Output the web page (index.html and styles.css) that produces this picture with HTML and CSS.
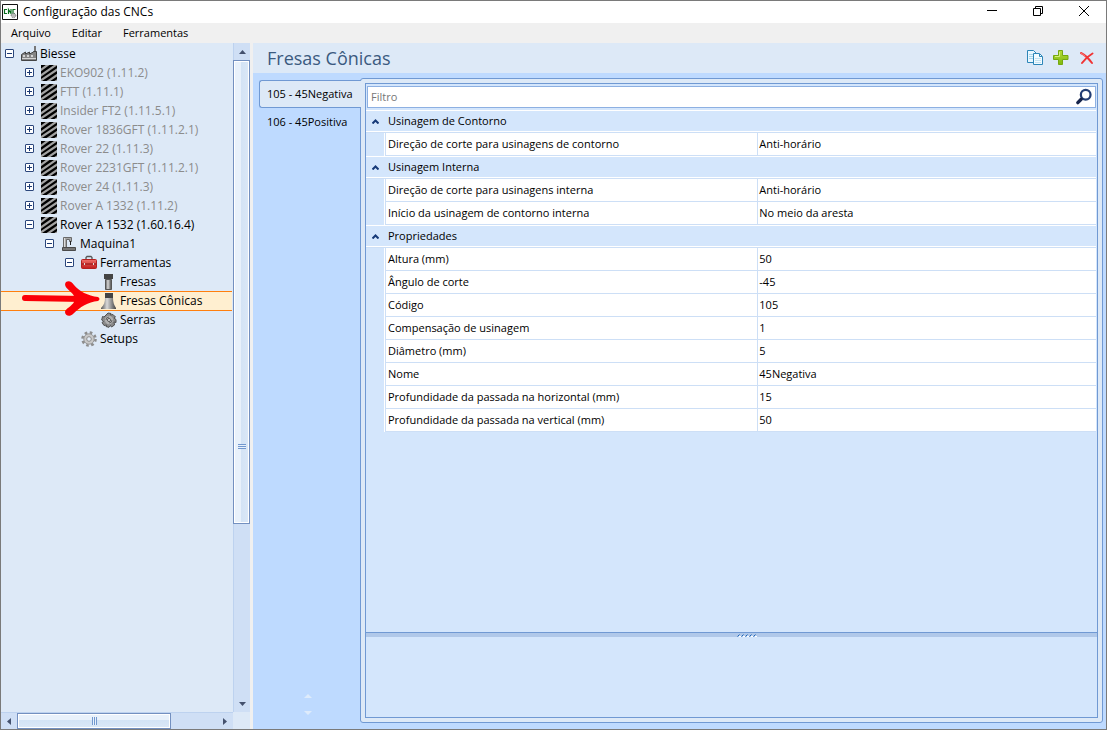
FILE: index.html
```html
<!DOCTYPE html>
<html lang="pt-BR">
<head>
<meta charset="utf-8">
<title>Configuração das CNCs</title>
<link rel="stylesheet" href="styles.css">
</head>
<body>
<svg class="defs" aria-hidden="true">
  <defs>
    <linearGradient id="metal" x1="0" x2="1" y1="0" y2="0">
      <stop offset="0" stop-color="#555"/><stop offset=".4" stop-color="#d8d8d8"/><stop offset="1" stop-color="#444"/>
    </linearGradient>
    <linearGradient id="leaf" x1="0" x2="0" y1="0" y2="1">
      <stop offset="0" stop-color="#b4dc3a"/><stop offset="1" stop-color="#7fb80e"/>
    </linearGradient>
    <linearGradient id="box" x1="0" x2="0" y1="0" y2="1">
      <stop offset="0" stop-color="#f0706a"/><stop offset="1" stop-color="#c01c1c"/>
    </linearGradient>
    <symbol id="stripes" viewBox="0 0 16 16">
      <path fill="#000" d="M0 0h16v16H0z"/>
      <path stroke="#a3a3a3" stroke-width="2.200" d="M-1 5.500 8-1M-1 11 17-1.500M-1 16 17 4M6 17l11-7.500M13 17.500l4-2.500"/>
    </symbol>
    <symbol id="factory" viewBox="0 0 16 16">
      <path fill="#858585" stroke="#444" d="M.5 14.500V8.500L4.500 6v2L8.500 6v2L12.500 6V5.500h3v9z"/>
      <path fill="#d5d5d5" d="M2 9h2v2H2zM6 9h2v2H6zM10 9h2v2h-2zM1 12h14v1H1z"/>
      <path fill="#777" d="M13 0h2v5h-2z"/>
    </symbol>
    <symbol id="machine" viewBox="0 0 16 16">
      <path fill="#a8a8a8" stroke="#6a6a6a" d="M2.500 11.500v-10h8v4h-2v-2h-3v8z"/>
      <path fill="#777" stroke="#4a4a4a" d="M1.500 11.500h13v3h-13z"/>
      <path stroke="#222" d="M9.500 5v4"/>
      <path fill="#ddd" d="M3 2h1v9H3z"/>
    </symbol>
    <symbol id="toolbox" viewBox="0 0 16 16">
      <path fill="none" stroke="#555" stroke-width="1.300" d="M5 5V2.500L6 1.500h4l1 1V5"/>
      <rect x=".5" y="4.500" width="15" height="9" rx="1" fill="url(#box)" stroke="#b42020"/>
      <path fill="#8e1010" d="M1 8.500h14v1H1z"/>
      <path fill="#ddd" d="M3 8h1v2H3zM12 8h1v2h-1z"/>
    </symbol>
    <symbol id="mill" viewBox="0 0 16 16">
      <path fill="url(#metal)" stroke="#555" d="M4.500 5.500h6v10h-6z"/>
      <path fill="#444" d="M3 0h9v5H3z"/>
    </symbol>
    <symbol id="cone" viewBox="0 0 16 16">
      <path fill="url(#metal)" d="M4 5h8c0 4 1 7 3 10v1H0v-1c3-3 4-6 4-10z"/>
      <path fill="#444" d="M4 0h8v5H4z"/>
    </symbol>
    <symbol id="saw" viewBox="0 0 16 16">
      <path fill="#8a8a8a" stroke="#505050" stroke-linejoin="round" d="M5 3 7 1l3 .5L9.500 3 12 2.500l2.500 2.500-1.500 1 2 1.500v3L13 10l.5 3-3 2-1-1.500L8 15.300l-3-.8.500-1.500-2.500.5L1 10.500l1.500-1L.7 8l.8-3.500L3 5z"/>
      <circle cx="8" cy="8" r="4.200" fill="#b0b0b0"/>
      <path fill="none" stroke="#666" d="M5 8q0-3 3-3M11 8q0 3-3 3"/>
      <circle cx="8" cy="8" r="1.500" fill="#eee" stroke="#555"/>
    </symbol>
    <symbol id="gear" viewBox="0 0 16 16">
      <circle cx="8" cy="8" r="6.500" fill="none" stroke="#8d8d8d" stroke-width="2.600" stroke-dasharray="2.600 2.500"/>
      <circle cx="8" cy="8" r="5.200" fill="#c9c9c9" stroke="#999"/>
      <circle cx="8" cy="8" r="2.300" fill="#e4edf7" stroke="#8d8d8d"/>
    </symbol>
  </defs>
</svg>

<div class="window">
  <header class="titlebar">
    <svg class="app-icon" viewBox="0 0 16 16" aria-hidden="true">
      <path fill="#fff" stroke="#111" d="M.5.500h15v15H.5z"/>
      <path fill="none" stroke="#0a6e1e" stroke-width="1.200" d="M5 5.500H2.500v4H5M6.500 10V5.500l2.500 4V5M13.500 5.500H11v4h2"/>
      <circle cx="11.500" cy="11.500" r="2.300" fill="#bbb" stroke="#777" stroke-dasharray="1 1"/>
    </svg>
    <h1 class="title">Configuração das CNCs</h1>
    <div class="window-buttons">
      <button class="wbtn" aria-label="Minimizar"><svg viewBox="0 0 12 12"><path d="M1 5.500h10"/></svg></button>
      <button class="wbtn" aria-label="Restaurar"><svg viewBox="0 0 12 12"><path d="M1.500 3.500h7v7h-7zM3.500 3V1.500h7v7H9"/></svg></button>
      <button class="wbtn" aria-label="Fechar"><svg viewBox="0 0 12 12"><path d="m1 1 10 10M11 1 1 11"/></svg></button>
    </div>
  </header>

  <nav class="menubar">
    <button class="menu">Arquivo</button>
    <button class="menu">Editar</button>
    <button class="menu">Ferramentas</button>
  </nav>

  <div class="content">
    <aside class="sidebar">
      <ul class="tree">
        <li class="node"><button class="expander open" aria-label="Recolher"></button><svg class="icon"><use href="#factory"/></svg><span>Biesse</span></li>
        <li class="node l1 dim"><button class="expander" aria-label="Expandir"></button><svg class="icon"><use href="#stripes"/></svg><span>EKO902 (1.11.2)</span></li>
        <li class="node l1 dim"><button class="expander" aria-label="Expandir"></button><svg class="icon"><use href="#stripes"/></svg><span>FTT (1.11.1)</span></li>
        <li class="node l1 dim"><button class="expander" aria-label="Expandir"></button><svg class="icon"><use href="#stripes"/></svg><span>Insider FT2 (1.11.5.1)</span></li>
        <li class="node l1 dim"><button class="expander" aria-label="Expandir"></button><svg class="icon"><use href="#stripes"/></svg><span>Rover 1836GFT (1.11.2.1)</span></li>
        <li class="node l1 dim"><button class="expander" aria-label="Expandir"></button><svg class="icon"><use href="#stripes"/></svg><span>Rover 22 (1.11.3)</span></li>
        <li class="node l1 dim"><button class="expander" aria-label="Expandir"></button><svg class="icon"><use href="#stripes"/></svg><span>Rover 2231GFT (1.11.2.1)</span></li>
        <li class="node l1 dim"><button class="expander" aria-label="Expandir"></button><svg class="icon"><use href="#stripes"/></svg><span>Rover 24 (1.11.3)</span></li>
        <li class="node l1 dim"><button class="expander" aria-label="Expandir"></button><svg class="icon"><use href="#stripes"/></svg><span>Rover A 1332 (1.11.2)</span></li>
        <li class="node l1"><button class="expander open" aria-label="Recolher"></button><svg class="icon"><use href="#stripes"/></svg><span>Rover A 1532 (1.60.16.4)</span></li>
        <li class="node l2"><button class="expander open" aria-label="Recolher"></button><svg class="icon"><use href="#machine"/></svg><span>Maquina1</span></li>
        <li class="node l3"><button class="expander open" aria-label="Recolher"></button><svg class="icon"><use href="#toolbox"/></svg><span>Ferramentas</span></li>
        <li class="node l4"><i class="blank"></i><svg class="icon"><use href="#mill"/></svg><span>Fresas</span></li>
        <li class="node l4 selected"><i class="blank"></i><svg class="icon"><use href="#cone"/></svg><span>Fresas Cônicas</span>
          <svg class="pointer" viewBox="0 0 80 36" aria-hidden="true"><path fill="none" stroke="#fb0007" stroke-linecap="round" stroke-linejoin="round" stroke-width="6" d="M4 17 62 18"/><path fill="#fb0007" d="M45 1c3-2 6 0 8 3 5 6 14 11 24 12q3 2 0 4c-10 1-18 6-25 13-3 3-8 2-8-2 0-3 7-6 9-10V15c-2-5-12-9-8-14z"/></svg>
        </li>
        <li class="node l4"><i class="blank"></i><svg class="icon"><use href="#saw"/></svg><span>Serras</span></li>
        <li class="node l3"><i class="blank"></i><svg class="icon"><use href="#gear"/></svg><span>Setups</span></li>
      </ul>
      <div class="vbar">
        <button class="sbtn" aria-label="Rolar para cima"><svg viewBox="0 0 7 4" width="7" height="4"><path d="M0 4h7L3.500 0z"/></svg></button>
        <div class="vtrack"><div class="vthumb"><i class="vgrip"></i></div></div>
        <button class="sbtn" aria-label="Rolar para baixo"><svg viewBox="0 0 7 4" width="7" height="4"><path d="M0 0h7L3.500 4z"/></svg></button>
      </div>
      <div class="hbar">
        <button class="sbtn" aria-label="Rolar para a esquerda"><svg viewBox="0 0 4 7" width="4" height="7"><path d="M4 0v7L0 3.500z"/></svg></button>
        <div class="htrack"><div class="hthumb"><i class="hgrip"></i></div></div>
        <button class="sbtn" aria-label="Rolar para a direita"><svg viewBox="0 0 4 7" width="4" height="7"><path d="M0 0v7l4-3.500z"/></svg></button>
      </div>
    </aside>

    <main class="main">
      <header class="heading">
        <h2 class="heading-text">Fresas Cônicas</h2>
        <button class="tool" aria-label="Duplicar"><svg viewBox="0 0 16 16"><path fill="#e9f7ff" stroke="#2d86b8" d="M.5.500h6l3 3v9h-9z"/><path fill="none" stroke="#a9d6ea" d="M2 4.500h4M2 6.500h4M2 8.500h4"/><path fill="#f2fbff" stroke="#2d86b8" d="M6.500 3.500h6l3 3v8h-9z"/><path fill="none" stroke="#2d86b8" d="M12.500 4v2.500H15"/><path fill="none" stroke="#c4e2f1" d="M8 8.500h6M8 10.500h6M8 12.500h6"/></svg></button>
        <button class="tool" aria-label="Adicionar"><svg viewBox="0 0 16 16"><path fill="url(#leaf)" stroke="#75a80f" d="M5.500.500h4v5h5.500v4H9.500v5h-4v-5H.5v-4h5z"/><path fill="none" stroke="#d5ef80" d="M6.500 2v4.500H2"/></svg></button>
        <button class="tool" aria-label="Excluir"><svg viewBox="0 0 16 16"><path fill="none" stroke="#f03434" stroke-width="2" stroke-linecap="round" d="M2 3c4 2 8 6 11 10M13.500 3.500C9 6 6 9 3 13"/><path fill="none" stroke="#fb7d7d" stroke-linecap="round" d="M2 3l4 3"/></svg></button>
      </header>

      <div class="workspace">
        <div class="tabs">
          <button class="tab active">105 - 45Negativa</button>
          <button class="tab">106 - 45Positiva</button>
          <div class="tab-scroll">
            <svg viewBox="0 0 8 4" width="8" height="4"><path d="M0 4h8L4 0z"/></svg>
            <svg viewBox="0 0 8 4" width="8" height="4"><path d="M0 0h8L4 4z"/></svg>
          </div>
        </div>
        <section class="panel">
          <div class="editor">
            <div class="filter">
              <input class="filter-input" type="text" placeholder="Filtro" aria-label="Filtro">
              <button class="search" aria-label="Procurar"><svg viewBox="0 0 16 16"><circle cx="9.500" cy="6" r="4.300" fill="none" stroke="#243f75" stroke-width="2"/><path stroke="#17254c" stroke-width="3" stroke-linecap="round" d="m5.500 10-3 3"/></svg></button>
            </div>
            <table class="grid">
              <colgroup><col class="c-gutter"><col class="c-name"><col></colgroup>
              <tbody>
                <tr class="cat"><td><button class="fold" aria-label="Recolher"><svg viewBox="0 0 7 5"><path d="M.5 4.500l3-3 3 3"/></svg></button></td><th colspan="2">Usinagem de Contorno</th></tr>
                <tr><td class="gutter"></td><td>Direção de corte para usinagens de contorno</td><td>Anti-horário</td></tr>
                <tr class="cat"><td><button class="fold" aria-label="Recolher"><svg viewBox="0 0 7 5"><path d="M.5 4.500l3-3 3 3"/></svg></button></td><th colspan="2">Usinagem Interna</th></tr>
                <tr><td class="gutter"></td><td>Direção de corte para usinagens interna</td><td>Anti-horário</td></tr>
                <tr><td class="gutter"></td><td>Início da usinagem de contorno interna</td><td>No meio da aresta</td></tr>
                <tr class="cat"><td><button class="fold" aria-label="Recolher"><svg viewBox="0 0 7 5"><path d="M.5 4.500l3-3 3 3"/></svg></button></td><th colspan="2">Propriedades</th></tr>
                <tr><td class="gutter"></td><td>Altura (mm)</td><td>50</td></tr>
                <tr><td class="gutter"></td><td>Ângulo de corte</td><td>-45</td></tr>
                <tr><td class="gutter"></td><td>Código</td><td>105</td></tr>
                <tr><td class="gutter"></td><td>Compensação de usinagem</td><td>1</td></tr>
                <tr><td class="gutter"></td><td>Diâmetro (mm)</td><td>5</td></tr>
                <tr><td class="gutter"></td><td>Nome</td><td>45Negativa</td></tr>
                <tr><td class="gutter"></td><td>Profundidade da passada na horizontal (mm)</td><td>15</td></tr>
                <tr><td class="gutter"></td><td>Profundidade da passada na vertical (mm)</td><td>50</td></tr>
              </tbody>
            </table>
            <div class="splitter"><svg viewBox="0 0 20 3" width="20" height="3"><path stroke="#fff" d="M2 2.500h2M6 2.500h2M10 2.500h2M14 2.500h2M18 2.500h2"/><path stroke="#1f66b8" d="M.5 2.500l2-2M4.500 2.500l2-2M8.500 2.500l2-2M12.500 2.500l2-2M16.500 2.500l2-2"/></svg></div>
            <div class="description"></div>
          </div>
        </section>
      </div>
    </main>
  </div>
</div>
</body>
</html>
```
FILE: styles.css
```css
* { box-sizing: border-box; }

body {
  margin: 0;
  padding: 0 2px 4px 0;
  height: 100vh;
  background: #fff;
  color: #000;
  font: 12px/16px "Open Sans", "Noto Sans", sans-serif;
}

button {
  margin: 0;
  padding: 0;
  border: 0;
  background: none;
  color: inherit;
  font: inherit;
}

svg { display: block; }
.defs { position: absolute; width: 0; height: 0; }

.window {
  display: flex;
  flex-direction: column;
  height: 100%;
  border: 1px solid #7a7a7a;
  background: #f0f0f0;
}

/* Title bar and menu */
.titlebar {
  display: flex;
  align-items: center;
  height: 22px;
  padding-left: 1px;
  background: #fff;
}
.app-icon { width: 16px; height: 16px; }
.title { flex: 1; margin: 0 0 0 5px; font-size: 12px; font-weight: 400; }
.window-buttons { display: flex; }
.wbtn { display: grid; place-items: center; width: 46px; height: 22px; }
.wbtn svg { width: 12px; height: 12px; margin: 0 0 3px 2px; fill: none; stroke: #000; }

.menubar {
  display: flex;
  gap: 21px;
  height: 20px;
  padding-left: 10px;
  font-size: 11px;
}

.content { display: flex; flex: 1; gap: 3px; min-height: 0; }

/* Tree */
.sidebar {
  display: grid;
  grid-template: minmax(0, 1fr) 17px / minmax(0, 1fr) 17px;
  width: 249px;
  background: #dde9f7;
}
.tree { margin: 0; padding: 1px 1px 0 0; list-style: none; }
.node {
  display: flex;
  align-items: center;
  height: 19px;
  padding-left: 4px;
  white-space: nowrap;
  font-size: 12px;
}
.l1 { padding-left: 24px; }
.l2 { padding-left: 44px; }
.l3 { padding-left: 64px; }
.l4 { padding-left: 84px; }
.dim { color: #8c8c8c; }
.blank { width: 9px; }
.icon { width: 16px; height: 16px; margin: 0 3px 0 7px; }
.expander {
  width: 9px;
  height: 9px;
  border: 1px solid #2c477c;
  border-radius: 1px;
  background:
    linear-gradient(#1d3a72, #1d3a72) center / 5px 1px no-repeat,
    linear-gradient(#1d3a72, #1d3a72) center / 1px 5px no-repeat,
    #fff;
}
.expander.open { background: linear-gradient(#1d3a72, #1d3a72) center / 5px 1px no-repeat, #fff; }
.selected {
  position: relative;
  background: #ffefd0;
  box-shadow: inset 0 1px #ff7f0e, 0 1px #ff7f0e;
}
.pointer { position: absolute; left: 20px; top: -10px; width: 80px; height: 36px; }

/* Scroll bars */
.vbar {
  display: flex;
  flex-direction: column;
  border-left: 1px solid #bdd2ef;
  background: #cfdff5;
}
.hbar {
  display: flex;
  border-top: 1px solid #bdd2ef;
  background: #cfdff5;
}
.sbtn { display: grid; place-items: center; flex: none; fill: #44516d; }
.vbar .sbtn { height: 17px; }
.hbar .sbtn { width: 16px; }
.vtrack, .htrack { flex: 1; min-height: 0; }
.vthumb, .hthumb {
  display: grid;
  place-items: center;
  border: 1px solid #7390c0;
  box-shadow: inset 0 0 0 1px #fff;
}
.vthumb {
  height: 73%;
  margin-left: -1px;
  background: linear-gradient(90deg, #e8f1fb 45%, #d3e3f5 45%, #dbe8f7);
}
.vgrip { width: 8px; height: 5px; margin-top: 310px; background: repeating-linear-gradient(#7298cf 0 1px, #e8f1fb 1px 2px); }
.hthumb {
  width: 77%;
  height: 100%;
  background: linear-gradient(#e8f1fb 45%, #d3e3f5 45%, #dbe8f7);
}
.hgrip { width: 5px; height: 8px; background: repeating-linear-gradient(90deg, #7298cf 0 1px, #e8f1fb 1px 2px); }

/* Main area */
.main { display: flex; flex: 1; flex-direction: column; min-width: 0; background: #bedaff; }
.heading {
  display: flex;
  align-items: center;
  gap: 10px;
  height: 30px;
  padding: 0 11px 0 14px;
  background: #dde9f7;
}
.heading-text { flex: 1; margin: 0; color: #3b5a7f; font-size: 18px; font-weight: 400; line-height: 28px; }
.tool svg { width: 16px; height: 16px; }

.workspace { display: flex; flex: 1; min-height: 0; padding: 5px 3px 6px 6px; }
.tabs { display: flex; flex-direction: column; width: 101px; padding-top: 2px; }
.tab {
  height: 28px;
  padding-left: 8px;
  text-align: left;
  font-size: 11px;
  white-space: nowrap;
}
.tab.active {
  z-index: 1;
  margin-right: -1px;
  padding-left: 7px;
  border: 1px solid #7099d3;
  border-right: 0;
  border-radius: 3px 0 0 3px;
  background: #dde9f7;
}
.tab-scroll {
  display: grid;
  gap: 13px;
  justify-content: center;
  margin-top: auto;
  padding: 0 3px 8px 0;
  fill: #deebfb;
}

.panel {
  flex: 1;
  min-width: 0;
  padding: 4px;
  border: 1px solid #7099d3;
  border-radius: 3px;
  background: #dde9f7;
}
.editor {
  display: flex;
  flex-direction: column;
  height: 100%;
  border: 1px solid #7099d3;
  background: #d4e6fc;
  font-size: 11px;
}
.filter {
  display: flex;
  height: 22px;
  margin: 2px 1px;
  border: 1px solid #8db0e2;
  background: #fff;
}
.filter-input {
  flex: 1;
  min-width: 0;
  padding: 0 3px;
  border: 0;
  outline: 0;
  background: none;
  font: inherit;
}
.filter-input::placeholder { color: #777; opacity: 1; }
.search { width: 20px; }
.search svg { width: 18px; height: 18px; }

.grid { width: 100%; padding-right: 1px; table-layout: fixed; border-spacing: 0; }
.c-gutter { width: 19px; }
.c-name { width: 51%; }
.grid tr { height: 23px; }
.grid td, .grid th { padding: 0 1px 0 2px; font-weight: 400; text-align: left; line-height: 20px; }
.grid td:last-child { padding-left: 1px; }
.grid td {
  border-left: 1px solid #cddff6;
  border-bottom: 1px solid #cddff6;
  background: #fff;
}
.grid td.gutter { border: 0; border-right: 1px solid #fff; background: #d4e6fc; }
.grid .cat td, .grid .cat th {
  padding-bottom: 2px;
  border: 0;
  border-top: 1px solid #fff;
  background: #d4e6fc;
  box-shadow: inset 0 -1px #cddff6, inset 0 -2px #fff;
}
.grid .cat th { padding-left: 3px; }
.fold { display: block; margin-left: 4px; }
.fold svg { width: 7px; height: 5px; fill: none; stroke: #173a78; stroke-width: 2; }

.splitter {
  display: grid;
  place-items: center;
  height: 5px;
  margin-top: auto;
  padding-left: 30px;
  border-top: 1px solid #7099d3;
  background: #b0c8e9;
}
.description { height: 80px; }
```
